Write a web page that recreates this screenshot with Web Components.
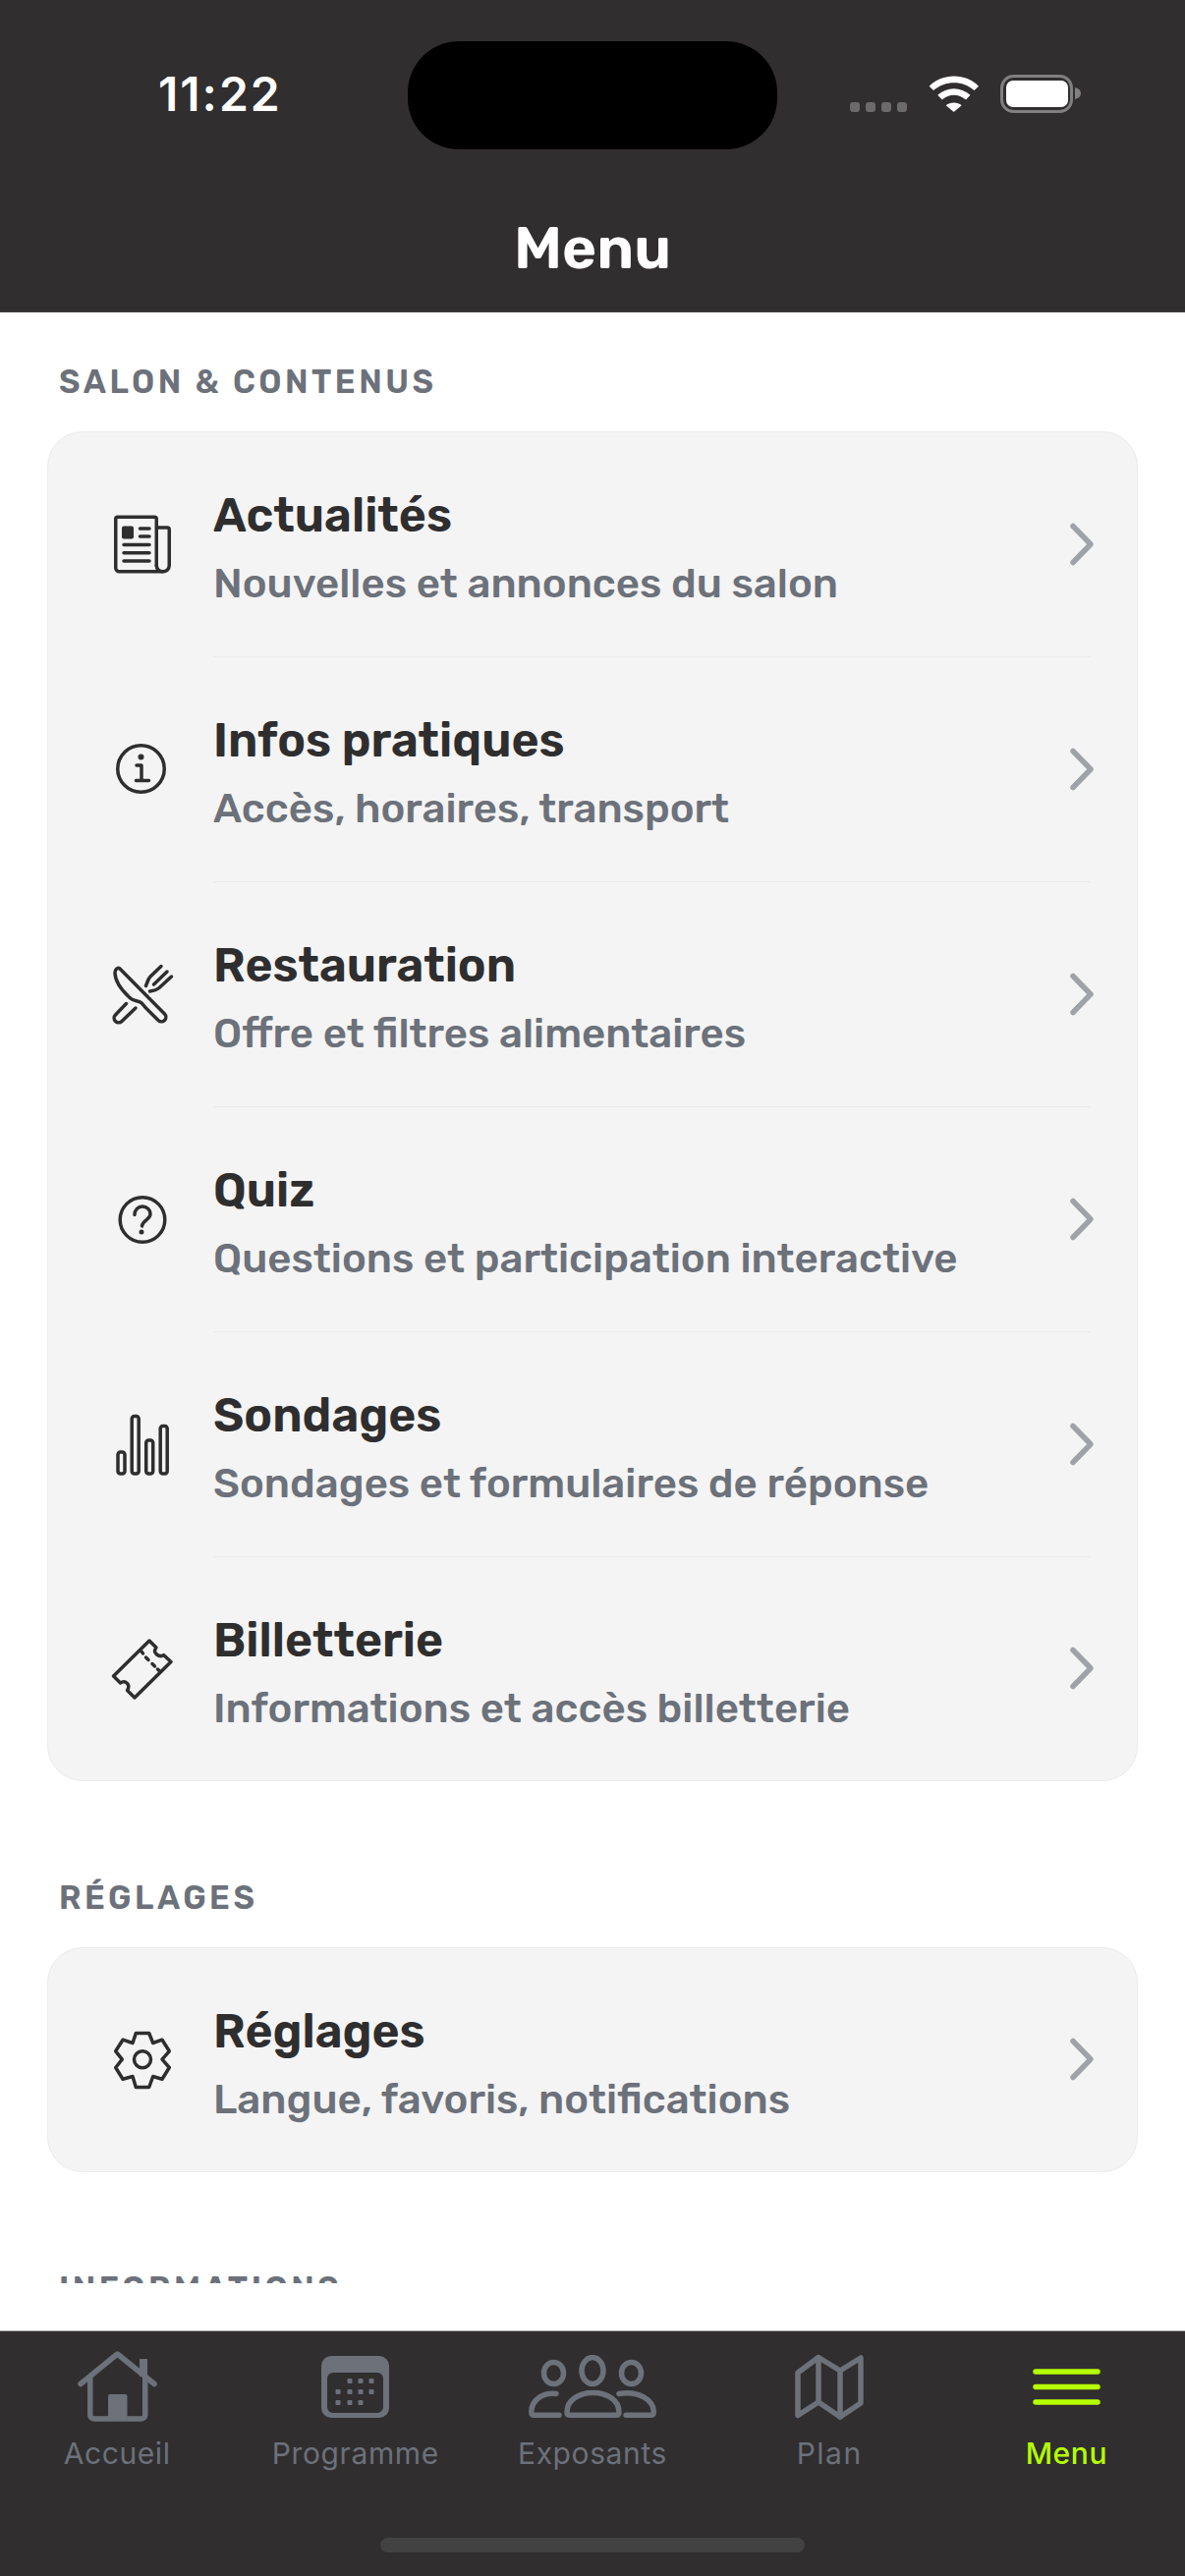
<!DOCTYPE html>
<html lang="fr">
<head>
<meta charset="utf-8">
<title>Menu</title>
<style>
  html, body { margin: 0; height: 100%; background: #fff; }
  body { font-family: Rubik, Inter, "Liberation Sans", sans-serif; }
</style>
</head>
<body>
<app-screen>
  <status-bar slot="status"></status-bar>
  <section-label>SALON &amp; CONTENUS</section-label>
  <menu-card>
    <menu-row icon="news" title="Actualités" sub="Nouvelles et annonces du salon"></menu-row>
    <menu-row icon="info" title="Infos pratiques" sub="Accès, horaires, transport"></menu-row>
    <menu-row icon="fork" title="Restauration" sub="Offre et filtres alimentaires"></menu-row>
    <menu-row icon="quiz" title="Quiz" sub="Questions et participation interactive"></menu-row>
    <menu-row icon="bars" title="Sondages" sub="Sondages et formulaires de réponse"></menu-row>
    <menu-row icon="ticket" title="Billetterie" sub="Informations et accès billetterie" last></menu-row>
  </menu-card>
  <section-label>RÉGLAGES</section-label>
  <menu-card>
    <menu-row icon="gear" title="Réglages" sub="Langue, favoris, notifications" last></menu-row>
  </menu-card>
  <section-label>INFORMATIONS</section-label>
  <tab-bar slot="tabs"></tab-bar>
</app-screen>

<script>
const ICON_ATTRS = `width="76" height="76" viewBox="0 0 76 76" fill="none" stroke="#2f2e2f" stroke-width="3.5" stroke-linecap="round" stroke-linejoin="round"`;
const ICONS = {
  news: `<svg ${ICON_ATTRS}>
    <path d="M53.250 59.500V12.250a2 2 0 0 0-2-2h-37.500a2 2 0 0 0-2 2V62a3.750 3.750 0 0 0 3.750 3.750H60a6.250 6.250 0 0 0 6.250-6.250V23a2 2 0 0 0-2-2h-11"/>
    <path d="M53.250 59.500a6.250 6.250 0 0 0 6.250 6.250"/>
    <rect x="18" y="19.500" width="12" height="13" rx="2" fill="#2f2e2f" stroke="none"/>
    <path d="M36.500 22h9.500M36.500 30h9.500M20 38.500h26M20 46.800h26M20 55h26"/></svg>`,
  info: `<svg ${ICON_ATTRS}>
    <circle cx="37.500" cy="37.500" r="23.750"/><path d="M33 34h5v15.500M32.500 49.500h13"/><circle cx="37.500" cy="25.500" r="3" fill="#2f2e2f" stroke="none"/></svg>`,
  fork: `<svg ${ICON_ATTRS}>
    <path d="M15.500 11.500L61.500 58a4.500 4.500 0 0 1-6.500 6.500L42 51.500c-2-2-3-5-6.500-6-4-1-7-1.500-10-4.500C17.500 33.500 11 25 11 16c0-3 2.500-5.500 4.500-4.500z"/>
    <path d="M22.500 47.500L11.500 59a4.500 4.500 0 0 0 6.500 6.500L32 52"/>
    <path d="M58 9.500L47 20c-2.500 2.500-3 6-4.500 9.500M64 15L50.500 28M68.500 20L56 31.500c-3 2.500-6 3-9.500 3.500"/></svg>`,
  quiz: `<svg ${ICON_ATTRS} stroke-width="3">
    <circle cx="39" cy="38.500" r="22.800"/><path d="M31 33.500c0-5 3.500-8.500 8-8.500s8 3.500 8 7.500c0 6-8 6.500-8.500 12.500"/><circle cx="38" cy="51" r="2.500" fill="#2f2e2f" stroke="none"/></svg>`,
  bars: `<svg ${ICON_ATTRS}>
    <rect x="14" y="46" width="7" height="22" rx="2.500"/><rect x="28.200" y="9.500" width="7" height="58.500" rx="2.500"/><rect x="42.700" y="34" width="7" height="34" rx="2.500"/><rect x="57.200" y="19.500" width="7" height="48.500" rx="2.500"/></svg>`,
  ticket: `<svg ${ICON_ATTRS}>
    <path d="M46 10L53 17c-2.500 3-1.500 5.500.5 7s4.500 2.500 7 .5L68 31.500 31 68l-7.500-7.500c2-3 1.500-5.500 0-7s-4-2.500-7-.5L9.500 46z"/>
    <path d="M38 21l1.500 2M42.500 27l2.500 2.500M49 33.500l2.500 2.500M54.500 39l2 2"/></svg>`,
  gear: `<svg ${ICON_ATTRS}>
    <path d="M32.300 11.500L29 21.500 19 18.200 11.700 29.800 18.300 38.200 11.700 46.500 19 58.200 29 55.500 32.300 66.500H45.700L49.700 55.500 59 58.200 66.300 46.500 59 38.200 66.300 29.800 59 18.200 49.700 21.500 45.700 11.500z"/><circle cx="39" cy="38.200" r="8.500"/></svg>`
};

class AppScreen extends HTMLElement {
  constructor() {
    super();
    this.attachShadow({ mode: "open" });
    this.shadowRoot.innerHTML = `
      <style>
        :host { display: flex; flex-direction: column; height: 2622px; background: #fff; overflow: hidden; }
        header { background: #302e2f; height: 318px; flex: none; border-bottom: 1px solid #3e3f42; box-sizing: border-box; }
        main { flex: 1; min-height: 0; overflow: hidden; padding: 0 48px; margin-bottom: 48px; }
      </style>
      <header><slot name="status"></slot></header>
      <main><slot></slot></main>
      <slot name="tabs"></slot>`;
  }
}

class StatusBar extends HTMLElement {
  constructor() {
    super();
    this.attachShadow({ mode: "open" });
    this.shadowRoot.innerHTML = `
      <style>
        :host { display: flex; flex-direction: column; color: #fff; }
        .top { height: 152px; position: relative; }
        .time { position: absolute; left: 161px; top: 67px; font: 600 48px/58px Inter, sans-serif; letter-spacing: 2px; }
        .island { position: absolute; left: 415px; top: 42px; width: 376px; height: 110px; border-radius: 52px; background: #000; }
        svg { position: absolute; left: 862px; top: 72px; }
        h1 { margin: 67px 0 0; text-align: center; font: 600 60px/68px Rubik, Inter, sans-serif; height: 68px; }
      </style>
      <div class="top">
        <span class="time">11:22</span>
        <div class="island"></div>
        <svg width="240" height="48" viewBox="0 0 240 48">
          <g fill="#6b6b6b"><rect x="3" y="32" width="10" height="10" rx="3"/><rect x="19" y="32" width="10" height="10" rx="3"/><rect x="35" y="32" width="10" height="10" rx="3"/><rect x="51" y="32" width="10" height="10" rx="3"/></g>
          <g fill="#fff"><path d="M83.700 15.700C97 2 121 2 134 15.700L129.500 20C118 9.500 100 9.500 88 20z"/><path d="M92.300 24.700C101.500 16 116 16 125.500 24.700L121 29.500C113.500 23 104 23 96.800 29.500z"/><path d="M100.700 35.300C105 31.500 112.500 31.500 116.700 35.300L108.700 42z"/></g>
          <rect x="157.500" y="5.500" width="71" height="36" rx="12" fill="none" stroke="#808080" stroke-width="3"/>
          <rect x="162" y="10" width="63" height="27" rx="7" fill="#fff"/>
          <path d="M232 17c4 1 6 3 6 6s-2 5-6 6z" fill="#808080"/>
        </svg>
      </div>
      <h1>Menu</h1>`;
  }
}

class SectionLabel extends HTMLElement {
  constructor() {
    super();
    this.attachShadow({ mode: "open" });
    this.shadowRoot.innerHTML = `
      <style>
        :host { display: block; padding: 0 12px; margin: 51px 0 30px; color: #6c717a; font: 600 33px/40px Rubik, Inter, sans-serif; letter-spacing: 3.500px; white-space: nowrap; }
      </style>
      <slot></slot>`;
  }
}

class MenuCard extends HTMLElement {
  constructor() {
    super();
    this.attachShadow({ mode: "open" });
    this.shadowRoot.innerHTML = `
      <style>
        :host { display: block; margin-bottom: 99px; background: #f4f4f4; border: 1px solid #ebebeb; border-radius: 36px; overflow: hidden; }
      </style>
      <slot></slot>`;
  }
}

class MenuRow extends HTMLElement {
  constructor() {
    super();
    this.attachShadow({ mode: "open" });
    const title = this.getAttribute("title");
    const sub = this.getAttribute("sub");
    this.removeAttribute("title");
    this.shadowRoot.innerHTML = `
      <style>
        :host { display: flex; align-items: center; height: 229px; position: relative; box-sizing: border-box; }
        :host([last]) { height: 227px; }
        .ic { width: 76px; height: 76px; margin: -2px 0 0 57px; flex: none; display: block; }
        .tx { margin-left: 35px; padding-top: 6px; flex: 1; min-width: 0; }
        :host([last]) .tx { padding-top: 8px; }
        .t { color: #2f2e2f; font: 600 48px/56px Rubik, Inter, sans-serif; }
        .s { color: #6c717a; font: 500 42px/50px Rubik, Inter, sans-serif; margin-top: 16px; }
        .ch { margin: -2px 40px 0 0; flex: none; }
        .line { position: absolute; left: 168px; right: 47px; bottom: 0; height: 1px; background: #ebebeb; }
        :host([last]) .line { display: none; }
      </style>
      <span class="ic">${ICONS[this.getAttribute("icon")]}</span>
      <div class="tx"><div class="t">${title}</div><div class="s">${sub}</div></div>
      <svg class="ch" width="32" height="48" viewBox="0 0 32 48" fill="none" stroke="#9fa3a8" stroke-width="5.500" stroke-linecap="round" stroke-linejoin="round"><path d="M7 5.500L25 24 7 42.500"/></svg>
      <div class="line"></div>`;
  }
}

const TABS = [
  ["Accueil", `<svg width="81" height="72" viewBox="0 0 81 72" fill="none" stroke="#6c717a" stroke-width="5.500" stroke-linecap="round" stroke-linejoin="round"><path d="M3 33.500L40.500 3 78 33.500"/><path d="M12.750 26V65a4 4 0 0 0 4 4H64.750a4 4 0 0 0 4-4V26"/><rect x="63" y="8" width="8" height="18" fill="#6c717a" stroke="none"/><rect x="31" y="44" width="19.500" height="26" rx="2" fill="#6c717a" stroke="none"/></svg>`],
  ["Programme", `<svg width="69" height="63" viewBox="0 0 69 63"><path fill-rule="evenodd" fill="#6c717a" d="M10 0h49a10 10 0 0 1 10 10v43a10 10 0 0 1-10 10H10A10 10 0 0 1 0 53V10A10 10 0 0 1 10 0zM12 17a6 6 0 0 0-6 6v29a6 6 0 0 0 6 6h45a6 6 0 0 0 6-6V23a6 6 0 0 0-6-6z"/><g fill="#6c717a"><rect x="26.500" y="23" width="5" height="5" rx="1"/><rect x="37.500" y="23" width="5" height="5" rx="1"/><rect x="48.500" y="23" width="5" height="5" rx="1"/><rect x="14.500" y="34" width="5" height="5" rx="1"/><rect x="26.500" y="34" width="5" height="5" rx="1"/><rect x="37.500" y="34" width="5" height="5" rx="1"/><rect x="48.500" y="34" width="5" height="5" rx="1"/><rect x="14.500" y="45" width="5" height="5" rx="1"/><rect x="26.500" y="45" width="5" height="5" rx="1"/><rect x="37.500" y="45" width="5" height="5" rx="1"/></g></svg>`],
  ["Exposants", `<svg width="130" height="64" viewBox="0 0 130 64" fill="none" stroke="#6c717a" stroke-width="5.500" stroke-linecap="round" stroke-linejoin="round"><ellipse cx="25.500" cy="18.500" rx="10" ry="11"/><ellipse cx="65" cy="16" rx="11" ry="13.500"/><ellipse cx="104.500" cy="18.500" rx="10" ry="11"/><path d="M28 39.500C14 38 2.750 46 2.750 58c0 2 1 3.250 3 3.250H31"/><path d="M39 58c0-12 12-19.500 26.500-19.500S92 46 92 58c0 2-1 3.250-3 3.250H42c-2 0-3-1.250-3-3.250z"/><path d="M92 39.500C112 36 127.250 46 127.250 58c0 2-1 3.250-3 3.250H99"/></svg>`],
  ["Plan", `<svg width="70" height="67" viewBox="0 0 70 67" fill="none" stroke="#6c717a" stroke-width="5.500" stroke-linecap="round" stroke-linejoin="round"><path d="M3 19L24 3.500 46 17 67 4V50L46 64 24 49 3 62.500z"/><path d="M24 3.500V49M46 17V64"/></svg>`],
  ["Menu", `<svg width="69" height="37" viewBox="0 0 69 37" fill="none" stroke="#b6ff00" stroke-width="5.500" stroke-linecap="round"><path d="M3 3h63M3 18.500h63M3 34h63"/></svg>`, true]
];

class TabBar extends HTMLElement {
  constructor() {
    super();
    this.attachShadow({ mode: "open" });
    const items = TABS.map(([label, svg, on]) => `
      <div class="tab${on ? " on" : ""}"><span class="ic">${svg}</span><span class="lb">${label}</span></div>`).join("");
    this.shadowRoot.innerHTML = `
      <style>
        :host { display: block; flex: none; height: 250px; background: #302e2f; border-top: 1px solid #a9a9a9; box-sizing: border-box; position: relative; }
        .tabs { display: grid; grid-template-columns: repeat(5, 1fr); }
        .tab { display: flex; flex-direction: column; align-items: center; color: #6c717a; font: 400 30px/36px Inter, sans-serif; letter-spacing: .6px; }
        .tab:first-child { padding-right: 3px; }
        .tab:nth-child(4) { letter-spacing: 1.500px; }
        .ic { height: 72px; margin-top: 20px; display: flex; align-items: center; justify-content: center; }
        .lb { margin-top: 14px; }
        .on { color: #b6ff00; font-weight: 500; }
        .home { position: absolute; left: 387px; top: 210px; width: 432px; height: 15px; border-radius: 8px; background: #424242; }
      </style>
      <div class="tabs">${items}</div>
      <div class="home"></div>`;
  }
}

customElements.define("app-screen", AppScreen);
customElements.define("status-bar", StatusBar);
customElements.define("section-label", SectionLabel);
customElements.define("menu-card", MenuCard);
customElements.define("menu-row", MenuRow);
customElements.define("tab-bar", TabBar);
</script>
</body>
</html>
